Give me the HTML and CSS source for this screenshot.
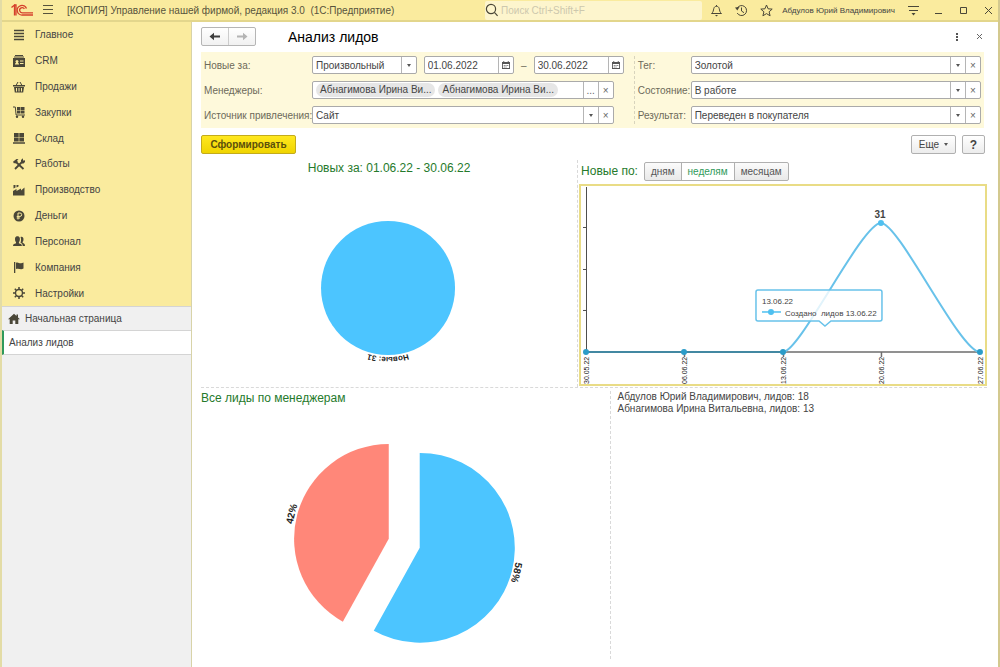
FILE: index.html
```html
<!DOCTYPE html>
<html lang="ru">
<head>
    <meta charset="UTF-8">
    <meta name="viewport" content="width=device-width, initial-scale=1.0">
    <title>Анализ лидов</title>
    <link rel="stylesheet" href="styles.css">
</head>
<body>
    <header class="topbar">
        <svg class="logo" viewBox="0 0 22 12" fill="none" stroke="#d5402b">
            <path d="M0.5 3.5L3.5 1v10.5M3 1h2v10.5" stroke-width="1.3"/>
            <path d="M15.5 4.5A4.8 4.8 0 1 0 11.5 11H22" stroke-width="1.3"/>
            <path d="M13.4 4.8A2.6 2.6 0 1 0 11.5 8.8H22" stroke-width="1.3"/>
        </svg>
        <button class="icon-btn burger" aria-label="Меню">
            <svg width="12" height="12" viewBox="0 0 12 12" stroke="#57533c"><path d="M1 1.5h10M1 5.5h10M1 9.5h10"/></svg>
        </button>
        <span class="app-title">[КОПИЯ] Управление нашей фирмой, редакция 3.0&nbsp; (1С:Предприятие)</span>
        <label class="search">
            <svg width="14" height="14" viewBox="0 0 14 14" fill="none" stroke="#4a4738" stroke-width="1.2"><circle cx="6" cy="6" r="4.6"/><path d="M9.4 9.4L12.6 12.8"/></svg>
            <input type="text" placeholder="Поиск Ctrl+Shift+F" aria-label="Поиск">
        </label>
        <div class="tools">
            <button class="icon-btn" aria-label="Уведомления">
                <svg width="13" height="13" viewBox="0 0 13 13" fill="none" stroke="#4a4738"><path d="M1.5 9.5h10C9.5 8 9.8 6.5 9.2 4.5C8.8 3 7.8 2.3 6.5 2.3S4.2 3 3.8 4.5C3.2 6.5 3.5 8 1.5 9.5z"/><path d="M6.5 1v1.3"/><path d="M5 11h3l-1.5 1.5z" fill="#4a4738" stroke="none"/></svg>
            </button>
            <button class="icon-btn" aria-label="История">
                <svg width="13" height="13" viewBox="0 0 13 13" fill="none" stroke="#4a4738"><path d="M2 4.5A5 5 0 1 1 2.2 9"/><path d="M6.5 3.5v3.5l2.5 1.7"/><path d="M0 3.5l4.5-.5L2.3 6.5z" fill="#4a4738" stroke="none"/></svg>
            </button>
            <button class="icon-btn" aria-label="Избранное">
                <svg width="13" height="13" viewBox="0 0 13 13" fill="none" stroke="#4a4738"><path d="M6.5 1l1.6 3.8 4.1.3-3.1 2.7 1 4-3.6-2.2-3.6 2.2 1-4L.8 5.1l4.1-.3z"/></svg>
            </button>
            <a class="user" href="#">Абдулов Юрий Владимирович</a>
            <button class="icon-btn" aria-label="Сервис">
                <svg width="13" height="12" viewBox="0 0 13 12" stroke="#4a4738"><path d="M1 2.5h11M2 6.5h9"/><path d="M4.5 9h4l-2 2.5z" fill="#4a4738" stroke="none"/></svg>
            </button>
            <button class="icon-btn" aria-label="Свернуть">
                <svg width="9" height="9" viewBox="0 0 9 9" stroke="#4a4738"><path d="M1 7.5h7"/></svg>
            </button>
            <button class="icon-btn" aria-label="Развернуть">
                <svg width="9" height="9" viewBox="0 0 9 9" fill="none" stroke="#4a4738"><path d="M1.5 1.5h6v6h-6z"/></svg>
            </button>
            <button class="icon-btn close" aria-label="Закрыть">
                <svg width="9" height="9" viewBox="0 0 9 9" stroke="#4a4738"><path d="M1 1l7 7M8 1L1 8"/></svg>
            </button>
        </div>
    </header>

    <div class="layout">
        <aside class="sidebar">
            <nav class="menu">
                <a href="#">
                    <svg viewBox="0 0 12 12"><path d="M1 1.5h10M1 4.5h10M1 7.5h10M1 10.5h10" stroke="#4a4738" stroke-width="1.4"/></svg>
                    Главное
                </a>
                <a href="#">
                    <svg viewBox="0 0 12 12"><path d="M2 0h8v1H2zM1 1.5h10v1H1z"/><path fill-rule="evenodd" d="M0 3h12v9H0zM2 9.5h4c0-1-.6-1.5-1.2-1.7a1.5 1.5 0 1 0-1.6 0C2.6 8 2 8.5 2 9.5zM7 5.5h3.5v1H7zM7 8h3.5v1H7z"/></svg>
                    CRM
                </a>
                <a href="#">
                    <svg viewBox="0 0 12 12"><path d="M0 4h12v1.5H0z"/><path d="M3 4.5l2-3.5M9 4.5L7 1" stroke="#4a4738"/><path fill-rule="evenodd" d="M1 6h10l-.8 5.5H1.8zM3 7v3.5h1V7zM5.5 7v3.5h1V7zM8 7v3.5h1V7z"/></svg>
                    Продажи
                </a>
                <a href="#">
                    <svg viewBox="0 0 12 12"><path d="M0 1h2.3l.8 8H12" fill="none" stroke="#4a4738"/><path d="M4 1h3.5v3H4zM8 1h3.5v3H8zM4 4.5h3.5v3H4zM8 4.5h3.5v3H8z"/><circle cx="4" cy="10.8" r="1.2"/><circle cx="10" cy="10.8" r="1.2"/></svg>
                    Закупки
                </a>
                <a href="#">
                    <svg viewBox="0 0 12 12"><path d="M1 1h4.7v4H1zM6.3 1H11v4H6.3zM1 5.6h4.7v4H1zM6.3 5.6H11v4H6.3zM0 10.3h12v1.4H0z"/></svg>
                    Склад
                </a>
                <a href="#">
                    <svg viewBox="0 0 12 12"><path d="M2 11l7-7M3 4l7.5 7" stroke="#4a4738" stroke-width="1.8"/><path d="M0 3.8L3.5 1l2 .3L4 2.7l.8.9L2.8 5.6l-1-.6-.8.6zM8 3.8V2l2-1.7v2l1 .5L12 2v2l-1.5 1.5H9z"/></svg>
                    Работы
                </a>
                <a href="#">
                    <svg viewBox="0 0 12 12"><path d="M0 11.5V7l3.5-2v2L8 4.5v2l3.5-3v8zM.5 1h2v2.5l-2 1zM3.5 1h2v1.5l-2 1z"/></svg>
                    Производство
                </a>
                <a href="#">
                    <svg viewBox="0 0 12 12"><circle cx="6" cy="6" r="5.5"/><path d="M5 9.5V3h2a1.6 1.6 0 0 1 0 3.4H3.7M3.7 8H7" fill="none" stroke="#faeb9e"/></svg>
                    Деньги
                </a>
                <a href="#">
                    <svg viewBox="0 0 12 12"><path d="M0 11c0-2 1.5-2.2 3-2.8V7.3C2 6 1.9 4.5 2.1 3 2.5.6 6.4.6 6.8 3c.2 1.5.1 3-.9 4.3v.9c1.5.6 3 .8 3 2.8z"/><path d="M7.5 2c2-.6 3 .6 3 2.2 0 1.3-.3 2.3-.9 2.900v.7c1.2.5 2.4.9 2.4 3.2H9.7c0-1.8-1-2.7-2.2-3.2C8.3 6 8.2 3.5 7.5 2z"/></svg>
                    Персонал
                </a>
                <a href="#">
                    <svg viewBox="0 0 12 12"><path d="M1 1h1.3v11H1zM3 1.8c2-1.2 3.2.8 5 .5.9 0 1.5-.3 2.5-.8v6c-3 1.7-4.5-.7-7.5.5z"/></svg>
                    Компания
                </a>
                <a href="#">
                    <svg viewBox="0 0 12 12"><circle cx="6" cy="6" r="3.5" fill="none" stroke="#4a4738" stroke-width="1.4"/><path d="M6 0v2.5M6 9.5V12M0 6h2.5M9.5 6H12M1.8 1.8l1.7 1.7M8.5 8.5l1.7 1.7M10.2 1.8L8.5 3.5M3.5 8.5l-1.7 1.7" stroke="#4a4738" stroke-width="1.5"/></svg>
                    Настройки
                </a>
            </nav>
            <nav class="pages">
                <a href="#">
                    <svg viewBox="0 0 12 12"><path d="M6 .8L0 6.3h1.7V11h3V7.5h2.6V11h3V6.3H12l-2-1.8v-3H8.5v1.6z"/></svg>
                    Начальная страница
                </a>
                <a href="#" class="active">Анализ лидов</a>
            </nav>
        </aside>

        <main class="content">
            <div class="page-head">
                <div class="history">
                    <button aria-label="Назад"><svg width="12" height="9" viewBox="0 0 12 9"><path d="M.5 4.5L5 .8v2.7h6v2H5v2.7z" fill="#3f3f3f"/></svg></button>
                    <button aria-label="Вперед"><svg width="12" height="9" viewBox="0 0 12 9"><path d="M11.500 4.500L7 .8v2.700H1v2h6v2.700z" fill="#b4b4b4"/></svg></button>
                </div>
                <h1>Анализ лидов</h1>
                <button class="icon-btn" aria-label="Еще действия"><svg width="10" height="10" viewBox="0 0 10 10" fill="#555"><path d="M4 1h2v2H4zM4 4h2v2H4zM4 7h2v2H4z"/></svg></button>
                <button class="icon-btn" aria-label="Закрыть форму"><svg width="7" height="7" viewBox="0 0 7 7" stroke="#666"><path d="M1 1l5 5M6 1L1 6"/></svg></button>
            </div>

            <form class="filters">
                <div class="group main-group">
                    <label for="period">Новые за:</label>
                    <div class="period">
                        <div class="field">
                            <select id="period"><option>Произвольный</option></select>
                            <span class="caret"></span>
                        </div>
                        <div class="field">
                            <input type="text" value="01.06.2022" aria-label="Начало периода">
                            <button type="button" aria-label="Календарь"><svg width="8" height="8" viewBox="0 0 9 9"><path fill-rule="evenodd" d="M0 1h1.5V0h1v1h4V0h1v1H9v8H0zM1 3.5V8h7V3.5zM2 4.5h1v1H2zM4 4.5h1v1H4zM6 4.5h1v1H6zM2 6.3h1v1H2zM4 6.3h1v1H4z" fill="#555"/></svg></button>
                        </div>
                        <span class="dash">–</span>
                        <div class="field">
                            <input type="text" value="30.06.2022" aria-label="Конец периода">
                            <button type="button" aria-label="Календарь"><svg width="8" height="8" viewBox="0 0 9 9"><path fill-rule="evenodd" d="M0 1h1.5V0h1v1h4V0h1v1H9v8H0zM1 3.5V8h7V3.5zM2 4.5h1v1H2zM4 4.5h1v1H4zM6 4.5h1v1H6zM2 6.3h1v1H2zM4 6.3h1v1H4z" fill="#555"/></svg></button>
                        </div>
                    </div>

                    <label for="managers">Менеджеры:</label>
                    <div class="field inset">
                        <span class="chip">Абнагимова Ирина Ви...</span>
                        <span class="chip">Абнагимова Ирина Ви...</span>
                        <input type="text" id="managers">
                        <button type="button" aria-label="Выбрать">...</button>
                        <button type="button" aria-label="Очистить">×</button>
                    </div>

                    <label for="source">Источник привлечения:</label>
                    <div class="field inset">
                        <select id="source"><option>Сайт</option></select>
                        <span class="caret"></span>
                        <button type="button" aria-label="Очистить">×</button>
                    </div>
                </div>

                <div class="group side-group">
                    <label for="tag">Тег:</label>
                    <div class="field">
                        <select id="tag"><option>Золотой</option></select>
                        <span class="caret"></span>
                        <button type="button" aria-label="Очистить">×</button>
                    </div>
                    <label for="state">Состояние:</label>
                    <div class="field">
                        <select id="state"><option>В работе</option></select>
                        <span class="caret"></span>
                        <button type="button" aria-label="Очистить">×</button>
                    </div>
                    <label for="result">Результат:</label>
                    <div class="field">
                        <select id="result"><option>Переведен в покупателя</option></select>
                        <span class="caret"></span>
                        <button type="button" aria-label="Очистить">×</button>
                    </div>
                </div>
            </form>

            <div class="actions">
                <button class="btn primary">Сформировать</button>
                <button class="btn more">Еще <span class="caret"></span></button>
                <button class="btn help">?</button>
            </div>

            <div class="row top-row">
                <section class="card leads">
                    <h2>Новых за: 01.06.22 - 30.06.22</h2>
                    <svg viewBox="0 0 376 200">
                        <circle cx="187" cy="112" r="67" fill="#4cc5ff"/>
                        <path id="leadsArc" d="M187 43a69 69 0 0 1 0 138a69 69 0 0 1 0-138" fill="none"/>
                        <text class="pie-label" text-anchor="middle"><textPath href="#leadsArc" startOffset="50%">Новые: 31</textPath></text>
                    </svg>
                </section>
                <section class="card weeks">
                    <div class="weeks-head">
                        <h2>Новые по:</h2>
                        <div class="toggle">
                            <input type="radio" name="step" id="days"><label for="days">дням</label>
                            <input type="radio" name="step" id="week" checked><label for="week">неделям</label>
                            <input type="radio" name="step" id="months"><label for="months">месяцам</label>
                        </div>
                    </div>
                    <div class="chart">
                        <svg viewBox="0 0 404 198">
                            <path d="M5.5 1v166M2 41.5h3M2 83.5h3M2 124.5h3" stroke="#4d4d4d" fill="none"/>
                            <path d="M5 166h394M103.5 166v5M202.5 166v5M300.5 166v5" stroke="#6e6e6e" stroke-width="1.5" fill="none"/>
                            <path d="M5 166H202" stroke="#2a86a8" stroke-width="1.5"/>
                            <path d="M202 166C219 166 281 37 300 37C318 37 379 166 399 166" stroke="#68c2ea" stroke-width="2" fill="none"/>
                            <g fill="#2b9cc8">
                                <circle cx="5" cy="166" r="3"/>
                                <circle cx="103" cy="166" r="3"/>
                                <circle cx="202" cy="166" r="3"/>
                                <circle cx="399" cy="166" r="3"/>
                            </g>
                            <circle cx="300" cy="37" r="3" fill="#4fc0f0"/>
                            <text class="value" x="299" y="32" text-anchor="middle">31</text>
                            <g class="dates">
                                <text transform="translate(8 198) rotate(-90)">30.05.22</text>
                                <text transform="translate(106 198) rotate(-90)">06.06.22</text>
                                <text transform="translate(205 198) rotate(-90)">13.06.22</text>
                                <text transform="translate(303 198) rotate(-90)">20.06.22</text>
                                <text transform="translate(402 198) rotate(-90)">27.06.22</text>
                            </g>
                            <path d="M177 104h122q2 0 2 2v27q0 2-2 2H250l-6 5-6-5H177q-2 0-2-2v-27q0-2 2-2z" fill="#fff" fill-opacity=".8" stroke="#68c2ea" stroke-width="1.5"/>
                            <path d="M181 126h19" stroke="#4fc0f0" stroke-width="1.5"/>
                            <circle cx="190" cy="126" r="3" fill="#4fc0f0"/>
                            <text class="tip" x="181" y="118">13.06.22</text>
                            <text class="tip" x="204" y="130">Создано&nbsp; лидов 13.06.22</text>
                        </svg>
                    </div>
                </section>
            </div>

            <div class="row bottom-row">
                <section class="card managers">
                    <h2>Все лиды по менеджерам</h2>
                    <svg viewBox="0 0 410 245">
                        <path d="M188 133V38a95 95 0 0 0-46 178z" fill="#ff8779"/>
                        <path d="M219 142V47a95 95 0 1 1-46 178z" fill="#4cc5ff"/>
                        <path id="redArc" d="M141 218A97 97 0 0 1 188 36" fill="none"/>
                        <path id="blueArc" d="M219 45A97 97 0 0 1 219 239" fill="none"/>
                        <text class="pie-label" text-anchor="middle"><textPath href="#redArc" startOffset="50%">42%</textPath></text>
                        <text class="pie-label" text-anchor="middle"><textPath href="#blueArc" startOffset="58%">58%</textPath></text>
                    </svg>
                </section>
                <section class="legend">
                    <p>Абдулов Юрий Владимирович, лидов: 18</p>
                    <p>Абнагимова Ирина Витальевна, лидов: 13</p>
                </section>
            </div>
        </main>
    </div>
</body>
</html>
```

FILE: styles.css
```css
*{
    margin: 0;
    padding: 0;
    box-sizing: border-box;
}
body{
    min-height: 100vh;
    display: flex;
    flex-direction: column;
    border-left: 2px solid #e3dca6;
    border-right: 2px solid #d3c98f;
    background: #fff;
    color: #444;
    font-family: "Liberation Sans", Arial, sans-serif;
    font-size: 10px;
}
button, input, select{
    font: inherit;
    color: inherit;
}
a{
    color: inherit;
    text-decoration: none;
}
svg{
    display: block;
}
.icon-btn{
    display: flex;
    align-items: center;
    justify-content: center;
    border: none;
    background: none;
}

/* top bar */
.topbar{
    display: flex;
    align-items: center;
    height: 22px;
    padding-left: 9px;
    background: #faeb9e;
    border-bottom: 2px solid #e3d68c;
}
.logo{
    width: 22px;
    height: 12px;
}
.burger{
    margin: 0 13px 0 9px;
}
.app-title{
    flex: 1;
    white-space: nowrap;
    color: #57533c;
}
.search{
    display: flex;
    align-items: center;
    gap: 2px;
    width: 22%;
    height: 19px;
    background: #fdf5cd;
    border-radius: 2px;
}
.search input{
    flex: 1;
    min-width: 0;
    border: none;
    background: none;
    outline: none;
}
.search input::placeholder{
    color: #cdc8ae;
}
.tools{
    display: flex;
    align-items: center;
}
.tools .icon-btn{
    width: 25px;
}
.tools .icon-btn:first-child{
    margin-left: 2px;
}
.tools .close{
    width: 20px;
    margin-left: 2px;
}
.user{
    margin: 0 6px 0 3px;
    font-size: 8px;
    white-space: nowrap;
}

/* sidebar */
.layout{
    display: flex;
    flex: 1;
}
.sidebar{
    width: 190px;
    flex-shrink: 0;
    background: #f0f0f0;
    border-right: 1px solid #d8d3a8;
}
.menu{
    display: flex;
    flex-direction: column;
    height: 284px;
    background: #faeb9e;
}
.menu a{
    flex: 1;
    display: flex;
    align-items: center;
    gap: 10px;
    padding-left: 11px;
}
.menu svg, .pages svg{
    width: 12px;
    height: 12px;
    fill: #4a4738;
}
.pages a{
    display: flex;
    align-items: center;
    gap: 5px;
    height: 24px;
    padding-left: 6px;
    border-top: 1px solid #d4d4d4;
}
.pages a.active{
    height: 25px;
    padding-left: 5px;
    background: #fff;
    border-bottom: 1px solid #d4d4d4;
    border-left: 2px solid #2f9a5b;
}

/* page */
.content{
    flex: 1;
    min-width: 0;
    display: flex;
    flex-direction: column;
    padding: 5px 11px 8px 9px;
}
.page-head{
    display: flex;
    align-items: center;
    height: 19px;
    margin-right: -3px;
}
.history{
    display: flex;
    width: 55px;
    height: 19px;
    border: 1px solid #b5b5b5;
    border-radius: 2px;
    background: linear-gradient(#fff, #f1f1f1);
}
.history button{
    flex: 1;
    display: flex;
    align-items: center;
    justify-content: center;
    border: none;
    background: none;
}
.history button + button{
    border-left: 1px solid #ccc;
}
h1{
    flex: 1;
    margin-left: 32px;
    font-size: 14px;
    font-weight: normal;
    color: #000;
}
.page-head .icon-btn{
    width: 22px;
}
h2{
    font-size: 12px;
    line-height: 16px;
    font-weight: normal;
    color: #257a2b;
}

/* filters */
.filters{
    display: flex;
    margin: 6px 3px 0 0;
    padding: 4px 3px;
    background: #fef9db;
}
.group{
    display: grid;
    align-items: center;
    gap: 7px 0;
    min-width: 0;
    color: #6d6a5a;
}
.group label{
    white-space: nowrap;
}
.main-group{
    flex: 55;
    grid-template-columns: 108px minmax(0, 1fr);
    padding-right: 10px;
}
.side-group{
    flex: 45;
    grid-template-columns: 53px minmax(0, 1fr);
    padding-left: 3px;
    border-left: 1px dashed #d8d4bd;
}
.field{
    display: flex;
    align-items: center;
    min-width: 0;
    height: 18px;
    background: #fff;
    border: 1px solid #aaa;
    border-radius: 2px;
    color: #444;
}
.inset{
    margin-right: 10px;
}
.field input, .field select{
    flex: 1;
    min-width: 0;
    height: 16px;
    padding-left: 3px;
    border: none;
    background: none;
    outline: none;
    appearance: none;
}
.caret{
    display: flex;
    align-items: center;
    justify-content: center;
}
.caret::after{
    content: "";
    border: 2px solid transparent;
    border-top: 3px solid #555;
    border-bottom: none;
}
.field button, .field .caret{
    display: flex;
    align-items: center;
    justify-content: center;
    flex-shrink: 0;
    width: 15px;
    height: 16px;
    color: #666;
    border: none;
    border-left: 1px solid #b5b5b5;
    background: none;
}
.period{
    display: flex;
    align-items: center;
}
.period .field{
    flex: 90;
}
.period .field:first-child{
    flex: 105;
    margin-right: 7px;
}
.dash{
    width: 20px;
    text-align: center;
}
.chip{
    height: 14px;
    margin-left: 3px;
    padding: 0 4px;
    line-height: 14px;
    white-space: nowrap;
    background: #e6e6e6;
    border-radius: 7px;
}

/* buttons */
.actions{
    display: flex;
    gap: 6px;
    margin: 7px 2px 0 0;
}
.btn{
    height: 19px;
    border: 1px solid #b0b0b0;
    border-radius: 2px;
    background: linear-gradient(#fff, #ececec);
}
.primary{
    width: 95px;
    margin-right: auto;
    font-weight: bold;
    color: #5a4f0c;
    border-color: #c3ab1c;
    background: linear-gradient(#ffe81f, #f0d400);
}
.more{
    display: flex;
    align-items: center;
    justify-content: center;
    gap: 5px;
    width: 45px;
}
.help{
    width: 23px;
    font-size: 12px;
    font-weight: bold;
}

/* charts */
.row{
    display: flex;
}
.card svg{
    width: 100%;
    height: auto;
}
.top-row{
    padding-top: 6px;
    border-bottom: 1px dashed #d9d9d9;
}
.leads{
    flex: 377;
    min-width: 0;
    border-right: 1px dashed #d9d9d9;
}
.leads h2{
    text-align: center;
}
.weeks{
    flex: 409;
    min-width: 0;
    padding: 0 0 1px 1px;
}
.weeks-head{
    display: flex;
    align-items: center;
    gap: 6px;
    height: 24px;
    padding: 0 0 2px 2px;
}
.toggle{
    display: flex;
    height: 19px;
    border: 1px solid #b0b0b0;
    border-radius: 2px;
    background: linear-gradient(#fbfbfb, #e9e9e9);
}
.toggle input{
    position: absolute;
    opacity: 0;
}
.toggle label{
    padding: 0 6px;
    line-height: 17px;
    color: #555;
}
.toggle label + input + label{
    border-left: 1px solid #b0b0b0;
}
.toggle input:checked + label{
    background: #fff;
    color: #2f9a5b;
}
.chart{
    border: 2px solid #e9dc86;
}
.pie-label{
    font-size: 10px;
    font-weight: bold;
    fill: #222;
}
.leads .pie-label{
    font-size: 8px;
}
.value{
    font-size: 10px;
    font-weight: bold;
    fill: #444;
}
.dates{
    font-size: 7px;
    fill: #222;
}
.tip{
    font-size: 8px;
    fill: #444;
}
.bottom-row{
    flex: 1;
    padding-top: 3px;
}
.managers{
    flex: 410;
    min-width: 0;
    border-right: 1px dashed #d9d9d9;
}
.managers h2{
    line-height: 15px;
}
.legend{
    flex: 370;
    padding-left: 6px;
    line-height: 12px;
}
```
